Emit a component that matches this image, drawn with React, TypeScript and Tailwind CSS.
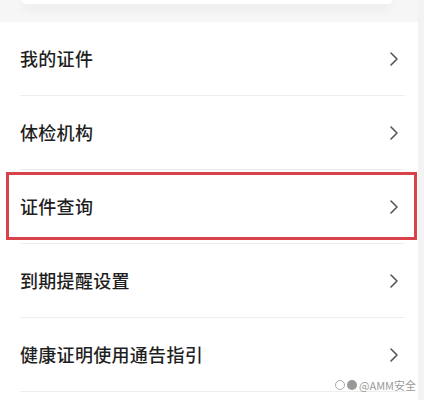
import React from "react";

const items = ["我的证件", "体检机构", "证件查询", "到期提醒设置", "健康证明使用通告指引"];

function Chevron() {
  return (
    <svg width="10" height="16" viewBox="0 0 10 16" fill="none">
      <path d="M2 2 L8 8 L2 14" stroke="#555" strokeWidth="1.6" strokeLinecap="round" strokeLinejoin="round" />
    </svg>
  );
}

export default function App() {
  return (
    <div
      className="w-[424px] h-[400px] overflow-hidden bg-white flex"
      style={{ fontFamily: '"Noto Sans CJK SC", "Noto Sans", sans-serif' }}
    >
      <div className="w-[418px] flex flex-col relative">
        <div className="h-[22px] bg-[#f6f6f6] px-[22px]">
          <div className="h-[4px] bg-white rounded-b-[10px] shadow-[0_4px_10px_rgba(0,0,0,0.08)] mr-[4px]" />
        </div>
        <div className="flex flex-col">
          {items.map((t, i) => (
            <div key={t} className="relative h-[74px] pl-[20px] pr-[13px]">
              {i === 2 && (
                <div className="absolute left-[6px] right-[1px] top-[2px] bottom-[4px] border-[3px] border-[#d8424a] pointer-events-none" />
              )}
              <div className="h-full flex items-center justify-between border-b border-[#eeeeee] pr-[6px]">
                <span className="text-[18px] font-medium text-[#1f1f1f] tracking-[0.3px]">{t}</span>
                <Chevron />
              </div>
            </div>
          ))}
        </div>
        <div className="absolute right-[2px] bottom-[7px] flex items-center gap-[2px] text-[11px] text-[#9a9a9a]">
          <span className="w-[10px] h-[10px] rounded-full border border-[#aaa]" />
          <span className="w-[10px] h-[10px] rounded-full bg-[#999]" />
          <span>@AMM安全</span>
        </div>
      </div>
      <div className="w-[6px] bg-[#f3f3f3]" />
    </div>
  );
}
